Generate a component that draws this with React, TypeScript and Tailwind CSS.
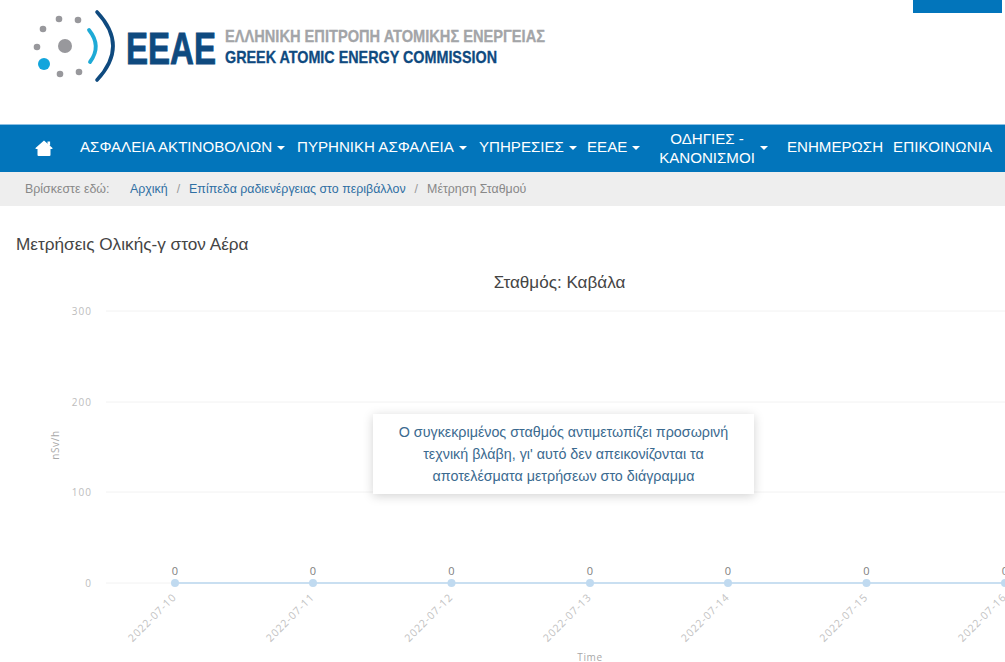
const navItems = [
  { label: "ΑΣΦΑΛΕΙΑ ΑΚΤΙΝΟΒΟΛΙΩΝ", cls: "w-[217px]" },
  { label: "ΠΥΡΗΝΙΚΗ ΑΣΦΑΛΕΙΑ", cls: "w-[182px]" },
  { label: "ΥΠΗΡΕΣΙΕΣ", cls: "w-[108px]" },
  { label: "ΕΕΑΕ", cls: "w-[72px]" },
];

const dates = [
  [175, "2022-07-10"],
  [313, "2022-07-11"],
  [451.5, "2022-07-12"],
  [590, "2022-07-13"],
  [728, "2022-07-14"],
  [866.5, "2022-07-15"],
  [1005, "2022-07-16"],
] as const;

const yTicks = [
  [311, "300"],
  [402, "200"],
  [492, "100"],
  [583, "0"],
] as const;

function Logo() {
  return (
    <svg width="560" height="100" viewBox="0 0 560 100" className="block">
      <circle cx="65" cy="46" r="7" fill="#98989c" />
      <circle cx="44" cy="64" r="6" fill="#12a5dc" />
      <circle cx="59" cy="19" r="3.3" fill="#98989c" />
      <circle cx="78" cy="20" r="3.3" fill="#98989c" />
      <circle cx="43" cy="29" r="3.3" fill="#98989c" />
      <circle cx="37" cy="47" r="3.3" fill="#98989c" />
      <circle cx="60" cy="74" r="3.3" fill="#98989c" />
      <circle cx="79" cy="72" r="3.3" fill="#98989c" />
      <path d="M89 30 Q 102 46 90 62" fill="none" stroke="#1eaad6" strokeWidth="3.8" strokeLinecap="round" />
      <path d="M97 12 Q 129 46 97 80" fill="none" stroke="#0f4a7f" strokeWidth="3.6" strokeLinecap="round" />
      <text x="126" y="63.5" fontFamily="'Liberation Sans', sans-serif" fontWeight="700" fontSize="44" fill="#0f4a7f" stroke="#0f4a7f" strokeWidth="0.9" textLength="90" lengthAdjust="spacingAndGlyphs">
        EEAE
      </text>
      <text x="225" y="42" fontFamily="'Liberation Sans', sans-serif" fontWeight="700" fontSize="17" fill="#a3a5a8" stroke="#a3a5a8" strokeWidth="0.3" textLength="320" lengthAdjust="spacingAndGlyphs">
        ΕΛΛΗΝΙΚΗ ΕΠΙΤΡΟΠΗ ΑΤΟΜΙΚΗΣ ΕΝΕΡΓΕΙΑΣ
      </text>
      <text x="225" y="63" fontFamily="'Liberation Sans', sans-serif" fontWeight="700" fontSize="17" fill="#0f4a7f" stroke="#0f4a7f" strokeWidth="0.3" textLength="272" lengthAdjust="spacingAndGlyphs">
        GREEK ATOMIC ENERGY COMMISSION
      </text>
    </svg>
  );
}

function Caret() {
  return <span className="ml-[5px] inline-block h-0 w-0 border-x-[4px] border-t-[4px] border-x-transparent border-t-white align-middle" />;
}

function Chart() {
  return (
    <div className="relative h-[392px] overflow-hidden">
      <svg width="1005" height="392" viewBox="0 270 1005 392" className="block" fontFamily="'Open Sans', sans-serif">
        <text x="559.5" y="288" textAnchor="middle" fontSize="17.1" fill="#444" fontFamily="'Liberation Sans', sans-serif">
          Σταθμός: Καβάλα
        </text>
        {yTicks.map(([y, label]) => (
          <g key={label}>
            <line x1="106" x2="1005" y1={y} y2={y} stroke="#f2f2f2" />
            <text x="92" y={y + 4} textAnchor="end" fontSize="10" letterSpacing="1" fill="#bdbdbd">
              {label}
            </text>
          </g>
        ))}
        <text transform="translate(59 445) rotate(-90)" textAnchor="middle" fontSize="10" letterSpacing="0.6" fill="#a8a8a8">
          nSv/h
        </text>
        <line x1="175" x2="1005" y1="583" y2="583" stroke="#c9dff1" strokeWidth="2" />
        {dates.map(([x, label]) => (
          <g key={label}>
            <circle cx={x} cy="583" r="4" fill="#c0daf0" />
            <text x={x} y="575" textAnchor="middle" fontSize="11" fill="#808080">
              0
            </text>
            <text transform={`translate(${x + 2} 598) rotate(-45)`} textAnchor="end" fontSize="10.5" letterSpacing="0.8" fill="#c2c2c2">
              {label}
            </text>
          </g>
        ))}
        <text x="590" y="661" textAnchor="middle" fontSize="10" letterSpacing="0.6" fill="#a8a8a8">
          Time
        </text>
      </svg>
      <div className="absolute left-[373px] top-[144px] flex h-[80px] w-[381px] items-center justify-center bg-white px-4 text-center text-[14.3px] leading-[22px] text-[#3b6a8f] shadow-[0_2px_10px_rgba(0,0,0,0.18)]">
        Ο συγκεκριμένος σταθμός αντιμετωπίζει προσωρινή τεχνική βλάβη, γι' αυτό δεν απεικονίζονται τα αποτελέσματα μετρήσεων στο διάγραμμα
      </div>
    </div>
  );
}

export default function App() {
  return (
    <div className="h-[662px] w-[1005px] overflow-hidden bg-white font-['Liberation_Sans',sans-serif]">
      <header className="relative h-[124px]">
        <Logo />
        <div className="absolute right-[3px] top-0 h-[13px] w-[89px] bg-[#0275bb]" />
      </header>

      <nav className="flex h-[48px] items-center border-t border-[#8cc0e4] bg-[#0275bb] pb-[2px] text-[15.1px] text-white">
        <div className="flex w-[80px] justify-center pl-[8px]">
          <svg width="18" height="18" viewBox="0 0 18 18" fill="#fff">
            <path d="M9 1.5 L17.5 9 Q18 10 16.5 10 L15.5 10 L15.5 16 Q15.5 17 14.5 17 L3.5 17 Q2.5 17 2.5 16 L2.5 10 L1.5 10 Q0 10 0.5 9 Z" />
            <rect x="12.5" y="2.5" width="2.6" height="4" />
          </svg>
        </div>
        {navItems.map((item) => (
          <div key={item.label} className={`whitespace-nowrap ${item.cls}`}>
            {item.label}
            <Caret />
          </div>
        ))}
        <div className="flex w-[128px] items-center">
          <span className="w-[96px] text-center leading-[19px]">ΟΔΗΓΙΕΣ - ΚΑΝΟΝΙΣΜΟΙ</span>
          <Caret />
        </div>
        <div className="w-[106px] whitespace-nowrap">ΕΝΗΜΕΡΩΣΗ</div>
        <div className="whitespace-nowrap tracking-[0.1px]">ΕΠΙΚΟΙΝΩΝΙΑ</div>
      </nav>

      <div className="flex h-[34px] items-center bg-[#eeeeee] pl-[25px] text-[12.4px] text-[#888]">
        <span className="w-[105px]">Βρίσκεστε εδώ:</span>
        <span className="text-[#2f6fa3]">Αρχική</span>
        <span className="mx-[9px] text-[#999]">/</span>
        <span className="text-[#2f6fa3]">Επίπεδα ραδιενέργειας στο περιβάλλον</span>
        <span className="mx-[9px] text-[#999]">/</span>
        <span>Μέτρηση Σταθμού</span>
      </div>

      <h1 className="h-[64px] pl-4 pt-[28px] text-[17.2px] leading-[20px] text-[#444]">Μετρήσεις Ολικής-γ στον Αέρα</h1>

      <Chart />
    </div>
  );
}
